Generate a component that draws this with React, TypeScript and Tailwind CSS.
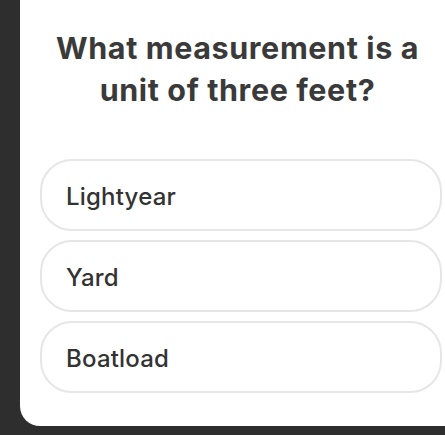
import React from "react";

const options = ["Lightyear", "Yard", "Boatload"];

export default function App() {
  return (
    <div className="w-[445px] h-[435px] bg-[#2e2e2e] overflow-hidden flex" style={{ fontFamily: "Inter, 'Open Sans', sans-serif" }}>
      <div className="ml-[20px] w-[425px] h-[426px] bg-white rounded-bl-[20px] flex flex-col shrink-0">
        <h1 className="mt-[27px] pl-[10px] text-center text-[30.5px] leading-[42px] font-bold text-[#3a3a3a] tracking-[0.6px]">
          What measurement is a<br />unit of three feet?
        </h1>
        <div className="mt-[48px] ml-[20px] w-[402px] flex flex-col gap-[9px]">
          {options.map((o) => (
            <div
              key={o}
              className="h-[72px] rounded-[32px] border-2 border-[#e6e6e6] flex items-center pl-[24px] pt-[3px] text-[24px] font-medium text-[#333333] tracking-[0.2px]"
            >
              {o}
            </div>
          ))}
        </div>
      </div>
    </div>
  );
}
